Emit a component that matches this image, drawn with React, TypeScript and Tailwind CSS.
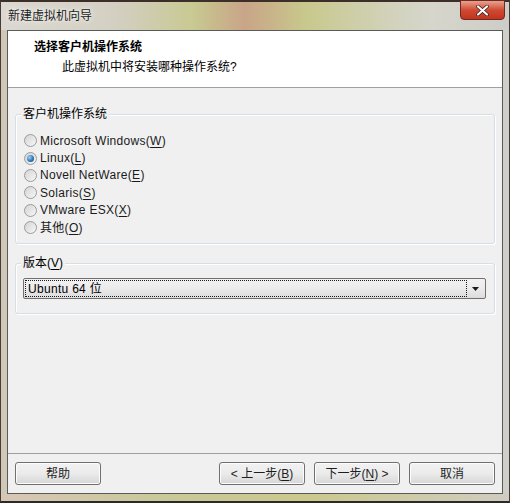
import React from 'react';

type OsOption = {
  name: string;
  key: string;
};

const osOptions: OsOption[] = [
  { name: 'Microsoft Windows', key: 'W' },
  { name: 'Linux', key: 'L' },
  { name: 'Novell NetWare', key: 'E' },
  { name: 'Solaris', key: 'S' },
  { name: 'VMware ESX', key: 'X' },
  { name: '其他', key: 'O' },
];

const font = "font-['Liberation_Sans','Noto_Sans_CJK_SC',sans-serif]";

const buttonClass =
  'w-[86px] h-[23px] rounded-[3px] border border-[#707070] bg-gradient-to-b from-[#f2f2f2] via-[#ebebeb] to-[#d6d6d6] text-[12px] text-[#1e1e1e] flex items-center justify-center shadow-[inset_0_0_0_1px_#fcfcfc]';

const Radio = ({ checked }: { checked: boolean }) => (
  <span className="w-[13px] h-[13px] rounded-full border border-[#9a9b9b] bg-gradient-to-br from-[#d4d4d4] to-[#f7f7f7] flex items-center justify-center">
    {checked && (
      <span className="w-[7px] h-[7px] rounded-full bg-[radial-gradient(circle_at_35%_35%,#9fd3f7,#2b6fb1_60%,#1a4d86)]" />
    )}
  </span>
);

const Mnemonic = ({ k }: { k: string }) => (
  <>
    (<span className="underline underline-offset-2">{k}</span>)
  </>
);

export default function App() {
  const selected = 'Linux';

  return (
    <div
      className={`${font} w-[510px] h-[503px] flex flex-col bg-[linear-gradient(90deg,#cfc8b8_0%,#d5d2c6_20%,#c9c995_40%,#cbc98c_60%,#d3d3c6_80%,#cfcfc9_100%)] border-t-2 border-t-[#3c2f2a] border-b-2 border-b-[#2a2a2a] border-x border-x-[#4a3a34]`}
    >
      {/* title bar */}
      <div className="h-[28px] flex items-start bg-[linear-gradient(90deg,rgba(220,218,212,0.9)_0%,rgba(210,205,190,0.6)_25%,rgba(198,200,140,0.6)_38%,rgba(200,120,125,0.45)_48%,rgba(198,200,140,0.6)_60%,rgba(215,215,205,0.7)_85%,rgba(205,205,200,0.8)_100%)]">
        <span className="ml-[7px] mt-[6px] text-[12px] leading-[16px] text-[#1c1c1c] [text-shadow:0_0_6px_#f4f4f0,0_0_3px_#f4f4f0]">
          新建虚拟机向导
        </span>
        <div className="ml-auto mr-[4px] -mt-[2px] w-[45px] h-[20px] rounded-b-[4px] border border-[#6b2a22] bg-gradient-to-b from-[#e8a191] via-[#cf4a33] to-[#c2331d] flex items-center justify-center">
          <svg width="13" height="11" viewBox="0 0 13 11">
            <path
              d="M2 1.5 L11 9.5 M11 1.5 L2 9.5"
              stroke="#3a1a14"
              strokeWidth="3.6"
              strokeLinecap="round"
            />
            <path
              d="M2 1.5 L11 9.5 M11 1.5 L2 9.5"
              stroke="#ffffff"
              strokeWidth="2.2"
              strokeLinecap="round"
            />
          </svg>
        </div>
      </div>

      {/* client area */}
      <div className="mx-[6px] flex-1 flex flex-col bg-[#f0f0f0] border border-[#5a5a5a]">
        <div className="h-[57px] bg-white border-b border-[#a0a0a0] flex flex-col">
          <div className="pl-[26px] pt-[8px] text-[12px] leading-[16px] font-bold text-[#000]">
            选择客户机操作系统
          </div>
          <div className="pl-[54px] pt-[4px] text-[12px] leading-[16px] text-[#000]">
            此虚拟机中将安装哪种操作系统?
          </div>
        </div>

        <div className="flex-1 flex flex-col px-[7px] pt-[26px]">
          {/* guest os group */}
          <div className="relative border border-[#d5dfe5] rounded-[3px] h-[130px] shadow-[inset_1px_1px_0_#ffffff,1px_1px_0_#ffffff]">
            <span className="absolute -top-[9px] left-[5px] px-[2px] bg-[#f0f0f0] text-[12px] leading-[16px] text-[#000]">
              客户机操作系统
            </span>
            <div className="pt-[17px] pl-[8px] flex flex-col">
              {osOptions.map((o) => (
                <div
                  key={o.key}
                  className="h-[17.4px] flex items-center gap-[3px] text-[12px] tracking-[0.3px] text-[#1a1a1a]"
                >
                  <Radio checked={o.name === selected} />
                  <span className="leading-[16px]">
                    {o.name}
                    <Mnemonic k={o.key} />
                  </span>
                </div>
              ))}
            </div>
          </div>

          {/* version group */}
          <div className="relative mt-[19px] border border-[#d5dfe5] rounded-[3px] h-[51px] shadow-[inset_1px_1px_0_#ffffff,1px_1px_0_#ffffff]">
            <span className="absolute -top-[9px] left-[5px] px-[2px] bg-[#f0f0f0] text-[12px] leading-[16px] text-[#000]">
              版本<Mnemonic k="V" />
            </span>
            <div className="mt-[14px] ml-[7px] mr-[8px] h-[21px] rounded-[2px] border border-[#707070] bg-gradient-to-b from-[#f2f2f2] via-[#ebebeb] to-[#dcdcdc] flex items-center pl-[1px] pr-[1px]">
              <div className="flex-1 h-[17px] border border-dotted border-[#1a1a1a] flex items-center pl-[2px] text-[12px] tracking-[0.3px] text-[#000]">
                Ubuntu 64 位
              </div>
              <div className="w-[17px] flex items-center justify-center">
                <svg width="7" height="4" viewBox="0 0 7 4">
                  <path d="M0 0 H7 L3.5 4 Z" fill="#1a1a1a" />
                </svg>
              </div>
            </div>
          </div>

          <div className="flex-1" />
        </div>

        {/* bottom buttons */}
        <div className="h-[40px] border-t border-[#a0a0a0] flex items-start pt-[8px] px-[7px]">
          <button className={buttonClass}>帮助</button>
          <div className="ml-auto flex gap-[9px]">
            <button className={buttonClass}>
              &lt; 上一步<Mnemonic k="B" />
            </button>
            <button
              className={`${buttonClass} border-[#3c7fb1] shadow-[inset_0_0_0_1px_#48d8fb] from-[#eaf6fd] via-[#dbeef9] to-[#bee6fd]`}
            >
              下一步<Mnemonic k="N" /> &gt;
            </button>
            <button className={buttonClass}>取消</button>
          </div>
        </div>
      </div>

      {/* bottom frame edge */}
      <div className="h-[7px] bg-[linear-gradient(90deg,#d8c6b6_0%,#c9c99a_30%,#cbc98c_60%,#d0ccc0_100%)]" />
    </div>
  );
}
